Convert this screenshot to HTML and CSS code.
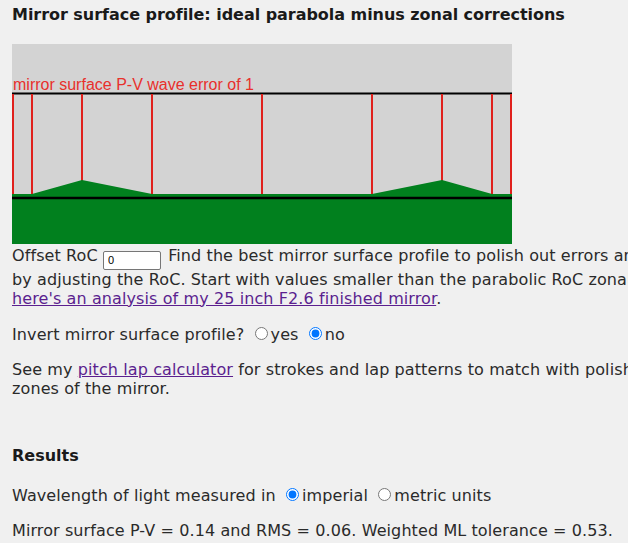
FILE: index.html
```html
<!DOCTYPE html>
<html lang="en">
<head>
    <meta charset="UTF-8">
    <title>Mirror surface profile</title>
    <link rel="stylesheet" href="styles.css">
</head>
<body>
    <div class="page">
        <h3 class="title">Mirror surface profile: ideal parabola minus zonal corrections</h3>

        <!-- profile plot: ideal parabola minus the zonal corrections -->
        <svg class="profile" width="500" height="200" viewBox="0 0 500 200">
            <rect x="0" y="0" width="500" height="200" fill="#d3d3d3"/>
            <text x="1" y="45.5" class="plot-label">mirror surface P-V wave error of 1</text>
            <line x1="0" y1="49.5" x2="500" y2="49.5" stroke="#000" stroke-width="2"/>
            <g stroke="#e0201c" stroke-width="2">
                <line x1="1" y1="50" x2="1" y2="150"/>
                <line x1="20" y1="50" x2="20" y2="150"/>
                <line x1="70" y1="50" x2="70" y2="150"/>
                <line x1="140" y1="50" x2="140" y2="150"/>
                <line x1="250" y1="50" x2="250" y2="150"/>
                <line x1="360" y1="50" x2="360" y2="150"/>
                <line x1="430" y1="50" x2="430" y2="150"/>
                <line x1="480" y1="50" x2="480" y2="150"/>
                <line x1="499" y1="50" x2="499" y2="150"/>
            </g>
            <polygon fill="#01801e" points="0,150 20,150 70,136 140,150 360,150 430,136 480,150 500,150 500,200 0,200"/>
            <line x1="0" y1="154" x2="500" y2="154" stroke="#000" stroke-width="2.5"/>
        </svg>

        <p class="roc">Offset RoC <input type="text" class="roc-input" value="0"> Find the best mirror surface profile to polish out errors and ridges by adjusting the RoC. Start with values smaller than the parabolic RoC zonal offsets; <a href="#" class="visited">here's an analysis of my 25 inch F2.6 finished mirror</a>.</p>

        <p>Invert mirror surface profile? <input type="radio" name="invert" id="invertYes"><label for="invertYes">yes</label> <input type="radio" name="invert" id="invertNo" checked><label for="invertNo">no</label></p>

        <p>See my <a href="#" class="visited">pitch lap calculator</a> for strokes and lap patterns to match with polishing the zones of the mirror.</p>

        <h3 class="results">Results</h3>

        <p>Wavelength of light measured in <input type="radio" name="units" id="imperial" checked><label for="imperial">imperial</label> <input type="radio" name="units" id="metric"><label for="metric">metric units</label></p>

        <p>Mirror surface P-V = 0.14 and RMS = 0.06. Weighted ML tolerance = 0.53.</p>
    </div>
</body>
</html>
```

FILE: styles.css
```css
html, body {
    overflow: hidden;
}
body {
    margin: 0;
    background-color: #f0f0f0;
    color: #2a2a2a;
    font-family: "DejaVu Sans", Verdana, sans-serif;
    font-size: 16px;
    line-height: 19px;
}
.page {
    width: 700px;
    padding: 0 12px;
}
.title {
    font-size: 16px;
    line-height: 19px;
    margin: 5px 0 20px;
    color: #1a1a1a;
    letter-spacing: -0.04px;
}
.profile {
    display: block;
}
.plot-label {
    font-family: "Liberation Sans", Arial, sans-serif;
    font-size: 16px;
    fill: #e8302c;
}
p {
    margin: 16px 0;
    letter-spacing: 0.1px;
}
.roc {
    margin: 2px 0 15px;
}
.roc-input {
    box-sizing: border-box;
    width: 58px;
    height: 19px;
    margin: 0 2px 0 0;
    padding: 1px 4px;
    font-family: "Liberation Sans", Arial, sans-serif;
    font-size: 11px;
    letter-spacing: 0;
    border: 1px solid #767676;
    border-radius: 2px;
    background: #fff;
    vertical-align: -3px;
}
a.visited {
    color: #5b1f8f;
}
.results {
    font-size: 16px;
    line-height: 19px;
    margin: 48px 0 20px;
    color: #1a1a1a;
}
input[type="radio"] {
    margin: 3px 3px 0 5px;
}
```
